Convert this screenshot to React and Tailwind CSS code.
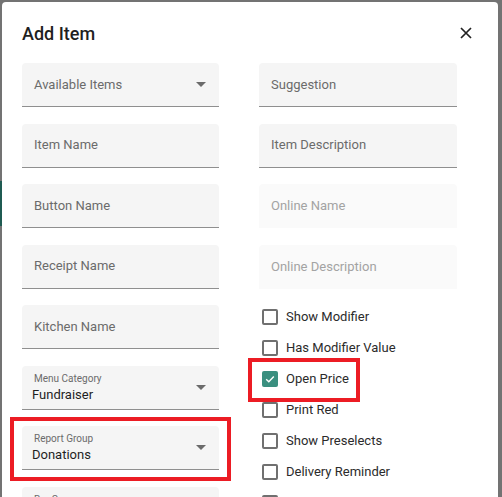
import React from "react";

const font = { fontFamily: "Roboto, 'Noto Sans', sans-serif" };

function Arrow() {
  return (
    <svg width="10" height="5" viewBox="0 0 10 5" className="shrink-0">
      <path d="M0 0 L10 0 L5 5 Z" fill="#6b6b6b" />
    </svg>
  );
}

function Field({ label, select, disabled }) {
  return (
    <div
      className={`h-[44px] rounded-t-[4px] flex items-center pl-[12px] pr-[13px] ${
        disabled ? "bg-[#fafafa]" : "bg-[#f5f5f5] border-b border-[#8f8f8f]"
      }`}
    >
      <span className={`flex-1 text-[13px] ${disabled ? "text-[#a3a3a3]" : "text-[#6b6b6b]"}`}>{label}</span>
      {select && <Arrow />}
    </div>
  );
}

function ValueSelect({ label, value }) {
  return (
    <div className="h-[44px] rounded-t-[4px] bg-[#f5f5f5] border-b border-[#8f8f8f] flex items-center pl-[10px] pr-[13px]">
      <div className="flex-1 flex flex-col pt-[1px]">
        <span className="text-[10px] leading-[12px] text-[#6b6b6b] pl-[2px]">{label}</span>
        <span className="text-[13px] leading-[17px] text-[#1f1f1f] mt-[1px]">{value}</span>
      </div>
      <Arrow />
    </div>
  );
}

function Check({ label, checked }) {
  return (
    <div className="h-[31px] flex items-center">
      <div className="w-[18px] h-[18px] flex items-center justify-center ml-[2px]">
        {checked ? (
          <div className="w-[16px] h-[16px] rounded-[2px] bg-[#3a8f7f] flex items-center justify-center">
            <svg width="12" height="12" viewBox="0 0 12 12">
              <path d="M2.2 6.2 L4.8 8.7 L9.8 3.4" fill="none" stroke="white" strokeWidth="1.4" />
            </svg>
          </div>
        ) : (
          <div className="w-[16px] h-[16px] rounded-[2px] border-2 border-[#707070]" />
        )}
      </div>
      <span className="ml-[7px] text-[13px] text-[#2b2b2b]">{label}</span>
    </div>
  );
}

export default function App() {
  return (
    <div className="relative w-[502px] h-[497px] overflow-hidden bg-[#737373]" style={font}>
      <div className="absolute left-0 top-[181px] w-[2px] h-[45px] bg-[#1f5b52]" />
      <div className="absolute left-[2px] top-[2px] w-[496px] h-[520px] bg-white rounded-t-[4px]">
        <div className="flex items-center justify-between pl-[20px] pr-[26px] pt-[19px] h-[43px]">
          <span className="text-[18px] font-medium text-[#1f1f1f]">Add Item</span>
          <svg width="12" height="12" viewBox="0 0 12 12">
            <path d="M1 1 L11 11 M11 1 L1 11" stroke="#222" strokeWidth="1.7" />
          </svg>
        </div>
        <div className="grid grid-cols-[197px_198px] gap-x-[40px] pl-[20px] pt-[18px]">
          <div className="flex flex-col gap-[16.5px]">
            <Field label="Available Items" select />
            <Field label="Item Name" />
            <Field label="Button Name" />
            <Field label="Receipt Name" />
            <Field label="Kitchen Name" />
            <ValueSelect label="Menu Category" value="Fundraiser" />
            <ValueSelect label="Report Group" value="Donations" />
            <ValueSelect label="Bar Group" value="None" />
          </div>
          <div className="flex flex-col">
            <div className="flex flex-col gap-[16.5px]">
              <Field label="Suggestion" />
              <Field label="Item Description" />
              <Field label="Online Name" disabled />
              <Field label="Online Description" disabled />
            </div>
            <div className="flex flex-col mt-[13px]">
              <Check label="Show Modifier" />
              <Check label="Has Modifier Value" />
              <Check label="Open Price" checked />
              <Check label="Print Red" />
              <Check label="Show Preselects" />
              <Check label="Delivery Reminder" />
              <Check label="Hide Item" />
            </div>
          </div>
        </div>
      </div>
      <div className="absolute left-[10px] top-[417px] w-[221px] h-[64px] border-4 border-[#ec1c24]" />
      <div className="absolute left-[248px] top-[358px] w-[112px] h-[44px] border-4 border-[#ec1c24]" />
    </div>
  );
}
